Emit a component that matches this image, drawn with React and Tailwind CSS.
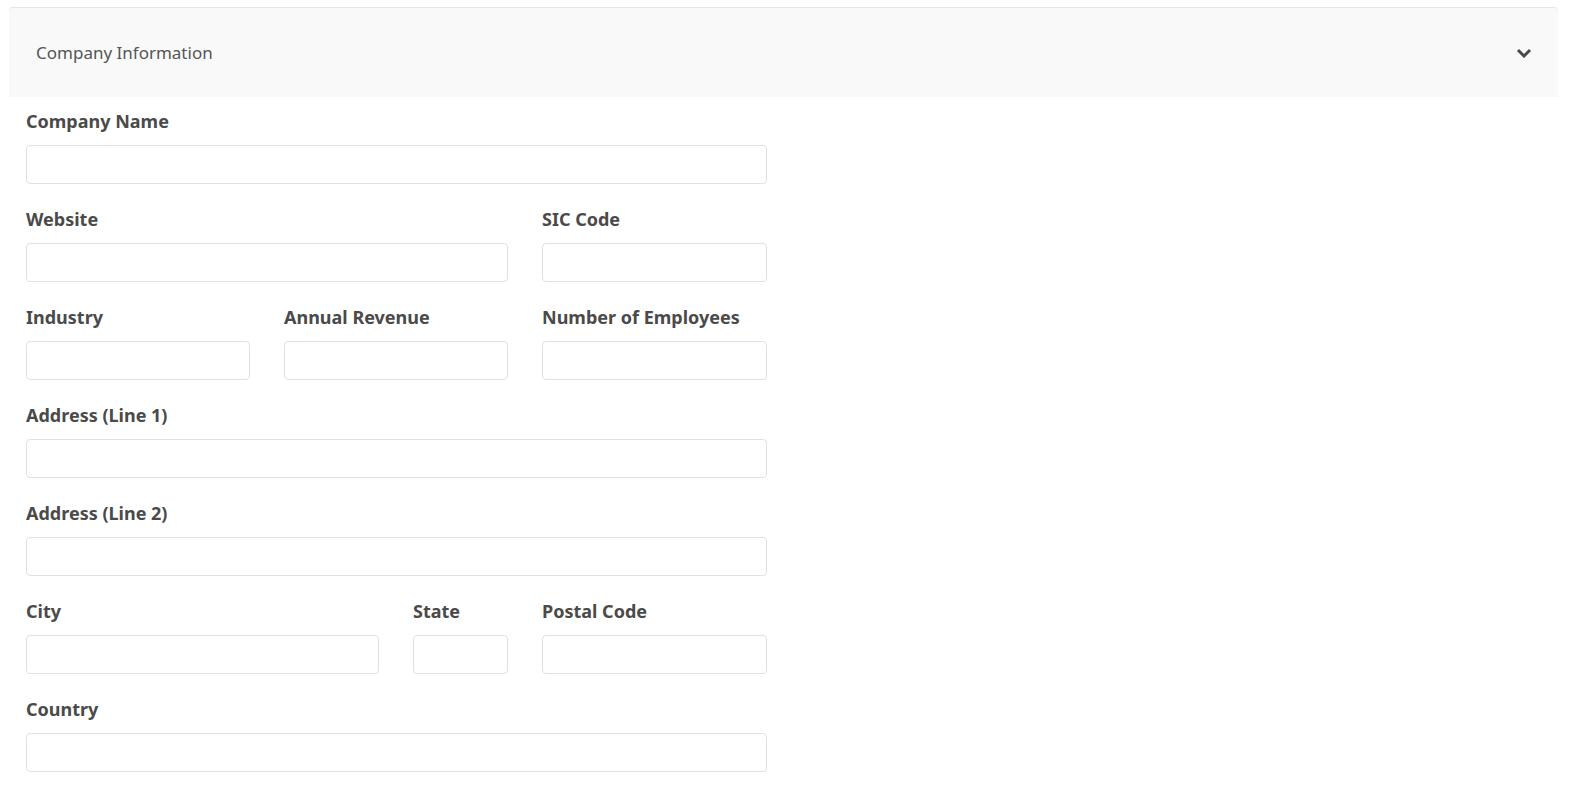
const F = "font-['Lato','Liberation_Sans',sans-serif]";

function Field({ label, className }) {
  return (
    <div className={`flex flex-col ${className}`}>
      <label className="h-[24px] text-[18px] font-bold leading-[24px] text-[#4a4a4a]">{label}</label>
      <input className="mt-[12px] h-[39px] w-full rounded-[4px] border border-[#dde2e6] bg-white outline-none" />
    </div>
  );
}

export default function App() {
  return (
    <div className={`${F} min-h-screen bg-white pt-[7px] pl-[9px] pr-[12px]`}>
      <div className="flex h-[90px] items-center justify-between rounded-t-[4px] border-t border-[#e6e6e6] bg-[#f9f9f9] pl-[27px] pr-[26px]">
        <span className="text-[17px] text-[#555]">Company Information</span>
        <svg width="16" height="10" viewBox="0 0 16 10" fill="none">
          <path d="M2 2l6 6 6-6" stroke="#4a4a4a" strokeWidth="3" />
        </svg>
      </div>
      <div className="flex w-[758px] flex-col gap-[23px] pl-[17px] pt-[12px]">
        <Field label="Company Name" className="w-[741px]" />
        <div className="flex gap-[34px]">
          <Field label="Website" className="w-[482px]" />
          <Field label="SIC Code" className="w-[225px]" />
        </div>
        <div className="flex gap-[34px]">
          <Field label="Industry" className="w-[224px]" />
          <Field label="Annual Revenue" className="w-[224px]" />
          <Field label="Number of Employees" className="w-[225px]" />
        </div>
        <Field label="Address (Line 1)" className="w-[741px]" />
        <Field label="Address (Line 2)" className="w-[741px]" />
        <div className="flex gap-[34px]">
          <Field label="City" className="w-[353px]" />
          <Field label="State" className="w-[95px]" />
          <Field label="Postal Code" className="w-[225px]" />
        </div>
        <Field label="Country" className="w-[741px]" />
      </div>
    </div>
  );
}
